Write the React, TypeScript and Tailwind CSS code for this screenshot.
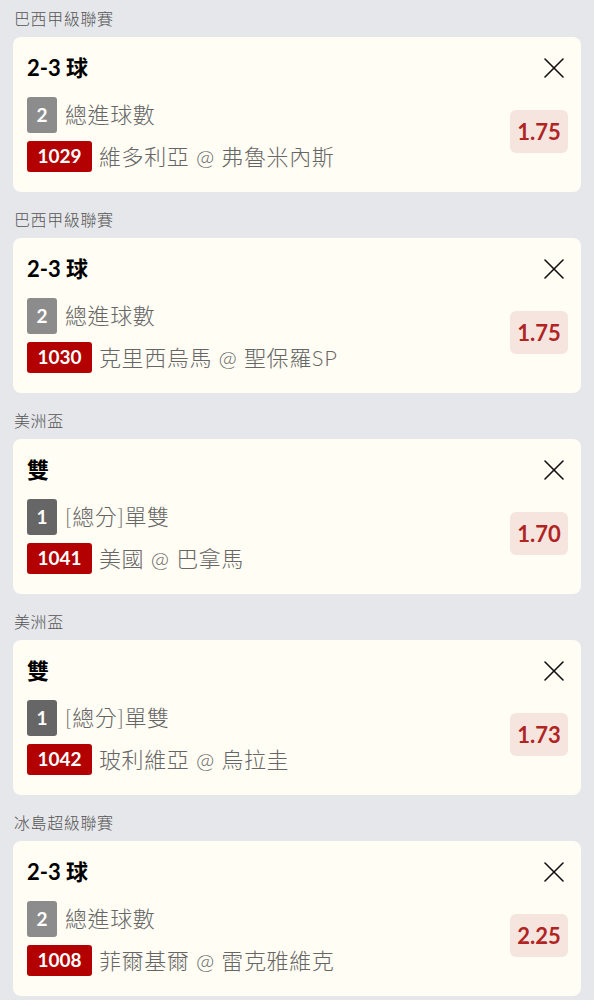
import React from "react";

type Bet = {
  league: string;
  title: string;
  num: string;
  numDark: boolean;
  market: string;
  code: string;
  match: string;
  odds: string;
};

const bets: Bet[] = [
  { league: "巴西甲級聯賽", title: "2-3 球", num: "2", numDark: false, market: "總進球數", code: "1029", match: "維多利亞 @ 弗魯米內斯", odds: "1.75" },
  { league: "巴西甲級聯賽", title: "2-3 球", num: "2", numDark: false, market: "總進球數", code: "1030", match: "克里西烏馬 @ 聖保羅SP", odds: "1.75" },
  { league: "美洲盃", title: "雙", num: "1", numDark: true, market: "[總分]單雙", code: "1041", match: "美國 @ 巴拿馬", odds: "1.70" },
  { league: "美洲盃", title: "雙", num: "1", numDark: true, market: "[總分]單雙", code: "1042", match: "玻利維亞 @ 烏拉圭", odds: "1.73" },
  { league: "冰島超級聯賽", title: "2-3 球", num: "2", numDark: false, market: "總進球數", code: "1008", match: "菲爾基爾 @ 雷克雅維克", odds: "2.25" },
];

const font = { fontFamily: 'Lato, "Noto Sans CJK TC", sans-serif' };

function CloseIcon() {
  return (
    <svg width="20" height="20" viewBox="0 0 20 20" fill="none" stroke="#111" strokeWidth="1.6" strokeLinecap="round">
      <line x1="1" y1="1" x2="19" y2="19" />
      <line x1="19" y1="1" x2="1" y2="19" />
    </svg>
  );
}

function Card({ b }: { b: Bet }) {
  return (
    <div className="pb-[9px]">
      <div className="h-[37px] flex items-center px-[14px] text-[16px] tracking-[0.6px] font-light text-[#555]">{b.league}</div>
      <div className="mx-[13px] h-[155px] rounded-[8px] bg-[#fffdf4] flex">
        <div className="flex-1 pl-[14px] pt-[17px]">
          <div className="h-[28px] leading-[28px] text-[22px] font-bold text-black">{b.title}</div>
          <div className="mt-[15px] h-[36px] flex items-center">
            <div
              className={
                "w-[30px] h-[36px] rounded-[3px] flex items-center justify-center text-white text-[19px] font-bold " +
                (b.numDark ? "bg-[#666666]" : "bg-[#8c8c8c]")
              }
            >
              {b.num}
            </div>
            <div className="ml-[8px] text-[22px] font-light tracking-[0.6px] text-[#666] leading-[36px]">{b.market}</div>
          </div>
          <div className="mt-[8px] h-[31px] flex items-center">
            <div className="w-[65px] h-[31px] rounded-[3px] bg-[#b30000] flex items-center justify-center text-white text-[19px] font-bold">
              {b.code}
            </div>
            <div className="ml-[7px] text-[22px] font-light tracking-[0.6px] text-[#666] leading-[31px] whitespace-nowrap">{b.match}</div>
          </div>
        </div>
        <div className="flex flex-col items-end pr-[13px] pt-[21px]">
          <div className="mr-[4px]">
            <CloseIcon />
          </div>
          <div className="mt-[32px] w-[58px] h-[43px] rounded-[6px] bg-[#f6e5df] flex items-center justify-center text-[22px] font-bold text-[#b02424]">
            {b.odds}
          </div>
        </div>
      </div>
    </div>
  );
}

export default function App() {
  return (
    <div className="w-[594px] h-[1000px] overflow-hidden bg-[#e6e7eb]" style={font}>
      {bets.map((b, i) => (
        <Card key={i} b={b} />
      ))}
    </div>
  );
}
